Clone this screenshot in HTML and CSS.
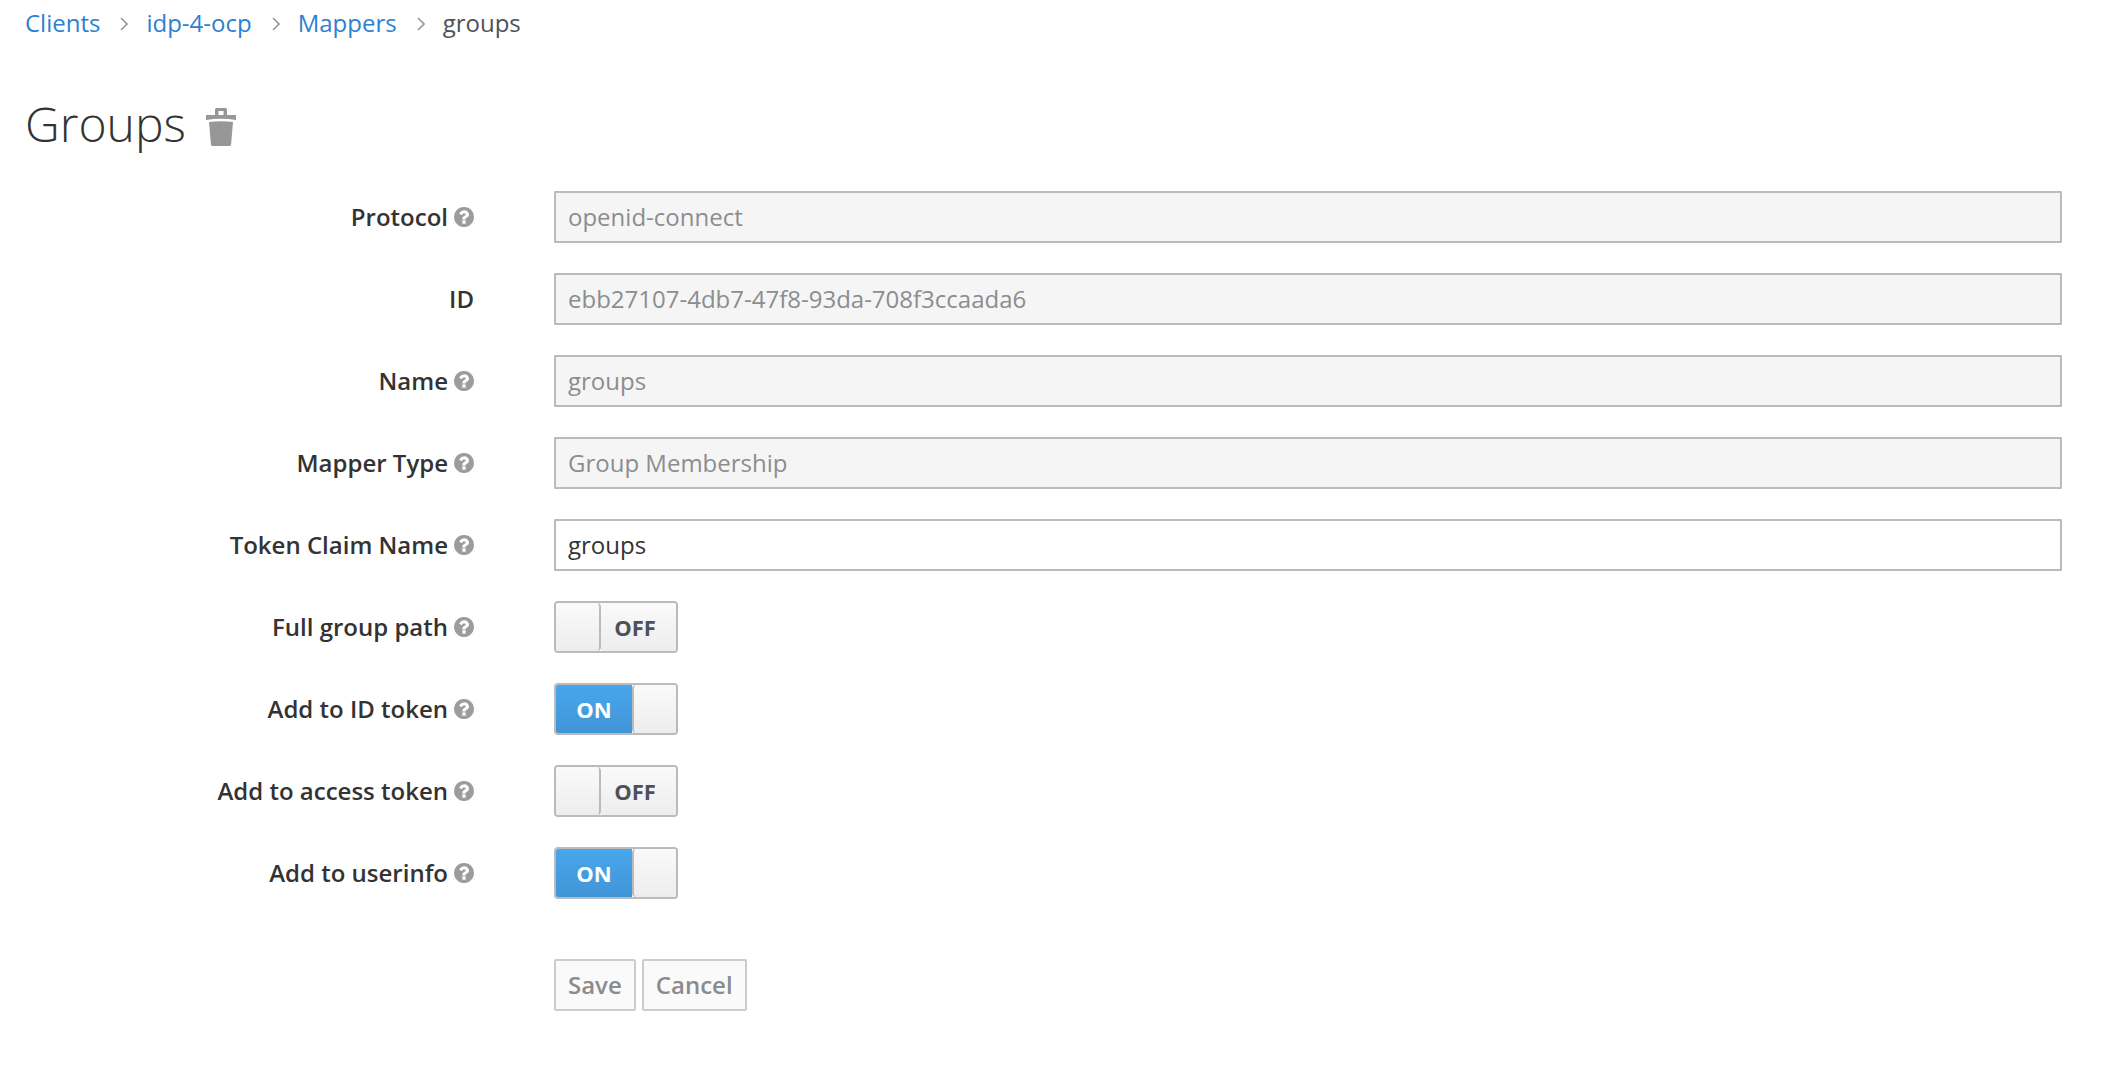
FILE: index.html
```html
<!DOCTYPE html>
<html lang="en">
<head>
    <meta charset="UTF-8">
    <title>Groups</title>
    <link rel="stylesheet" href="styles.css">
</head>
<body>
    <svg class="defs" width="0" height="0">
        <symbol id="help" viewBox="0 0 1536 1536">
            <path d="M896 1248v-192q0-14-9-23t-23-9h-192q-14 0-23 9t-9 23v192q0 14 9 23t23 9h192q14 0 23-9t9-23zm256-672q0-88-55.5-163t-138.5-116-170-41q-243 0-371 213-15 24 8 42l132 100q7 6 19 6 16 0 25-12 53-68 86-92 34-24 86-24 48 0 85.5 26t37.5 59q0 38-20 61t-68 45q-63 28-115.5 86.5t-52.5 125.5v36q0 14 9 23t23 9h192q14 0 23-9t9-23q0-19 21.5-49.5t54.5-49.5q32-18 49-28.5t46-35 44.5-48 28-60.5 12.5-81zm384 192q0 209-103 385.5t-279.5 279.5-385.5 103-385.5-103-279.5-279.5-103-385.5 103-385.5 279.5-279.5 385.5-103 385.5 103 279.5 279.5 103 385.5z"/>
        </symbol>
        <symbol id="chevron" viewBox="0 0 8 14">
            <path d="M1 1l6 6-6 6" fill="none" stroke="currentColor" stroke-width="1.6"/>
        </symbol>
    </svg>

    <nav class="breadcrumb">
        <a href="#">Clients</a>
        <svg class="sep"><use href="#chevron"/></svg>
        <a href="#">idp-4-ocp</a>
        <svg class="sep"><use href="#chevron"/></svg>
        <a href="#">Mappers</a>
        <svg class="sep"><use href="#chevron"/></svg>
        <span>groups</span>
    </nav>

    <h1 class="title">
        Groups
        <svg class="trash" viewBox="0 0 30 38">
            <path d="M10 0h10l1 1v6h9v5q-15-2.500-30 0v-5h9v-6zM12.500 3v4h5v-4z" fill-rule="evenodd"/>
            <path d="M3 14q12-1.500 24 0l-2 23-1 1h-18l-1-1z"/>
        </svg>
    </h1>

    <form class="mapper-form">
        <div class="row">
            <label><span>Protocol</span> <svg class="help"><use href="#help"/></svg></label>
            <input class="field" type="text" value="openid-connect" readonly disabled>
        </div>
        <div class="row">
            <label><span>ID</span></label>
            <input class="field" type="text" value="ebb27107-4db7-47f8-93da-708f3ccaada6" readonly disabled>
        </div>
        <div class="row">
            <label><span>Name</span> <svg class="help"><use href="#help"/></svg></label>
            <input class="field" type="text" value="groups" readonly disabled>
        </div>
        <div class="row">
            <label><span>Mapper Type</span> <svg class="help"><use href="#help"/></svg></label>
            <input class="field" type="text" value="Group Membership" readonly disabled>
        </div>
        <div class="row">
            <label><span>Token Claim Name</span> <svg class="help"><use href="#help"/></svg></label>
            <input class="field" type="text" value="groups">
        </div>
        <div class="row">
            <label><span>Full group path</span> <svg class="help"><use href="#help"/></svg></label>
            <div class="switch"><span class="knob"></span><span class="off">OFF</span></div>
        </div>
        <div class="row">
            <label><span>Add to ID token</span> <svg class="help"><use href="#help"/></svg></label>
            <div class="switch"><span class="on">ON</span><span class="knob knob-right"></span></div>
        </div>
        <div class="row">
            <label><span>Add to access token</span> <svg class="help"><use href="#help"/></svg></label>
            <div class="switch"><span class="knob"></span><span class="off">OFF</span></div>
        </div>
        <div class="row">
            <label><span>Add to userinfo</span> <svg class="help"><use href="#help"/></svg></label>
            <div class="switch"><span class="on">ON</span><span class="knob knob-right"></span></div>
        </div>
        <div class="row actions">
            <div class="buttons">
                <button type="button">Save</button>
                <button type="button">Cancel</button>
            </div>
        </div>
    </form>
</body>
</html>
```

FILE: styles.css
```css
body {
    font-family: 'Open Sans', sans-serif;
    font-size: 24px;
    background-color: #fff;
    color: #333;
    margin: 0;
    padding: 0 60px 0 25px;
}
.defs {
    position: absolute;
}
.breadcrumb {
    display: flex;
    align-items: center;
    height: 44px;
    color: #4d5258;
}
.breadcrumb a {
    color: #2f7fd1;
    text-decoration: none;
}
.sep {
    width: 8px;
    height: 14px;
    margin: 4px 18px 0 20px;
    color: #999;
}
.title {
    display: flex;
    align-items: center;
    gap: 20px;
    font-size: 48px;
    font-weight: 300;
    line-height: 64px;
    margin: 48px 0 35px;
}
.trash {
    width: 30px;
    height: 38px;
    fill: #979797;
    margin-top: 6px;
}
.row {
    display: grid;
    grid-template-columns: 449px 1fr;
    column-gap: 80px;
    margin-bottom: 30px;
    align-items: center;
    height: 52px;
}
.row label {
    display: flex;
    align-items: center;
    justify-content: flex-end;
    gap: 6px;
    font-weight: 600;
}
.row label span {
    padding-bottom: 2px;
}
.help {
    width: 20px;
    height: 20px;
    fill: #9c9c9c;
}
.field {
    box-sizing: border-box;
    width: 100%;
    height: 52px;
    padding: 0 12px 2px;
    font-family: inherit;
    font-size: 24px;
    color: #333;
    background-color: #fff;
    border: 2px solid #bbb;
    border-radius: 1px;
    outline: none;
}
.field:disabled {
    color: #8b8d8f;
    background-color: #f5f5f5;
    opacity: 1;
}
.switch {
    box-sizing: border-box;
    display: flex;
    width: 124px;
    height: 52px;
    border: 2px solid #bbb;
    border-radius: 4px;
    overflow: hidden;
    font-weight: 700;
}
.knob {
    box-sizing: border-box;
    width: 45px;
    background: linear-gradient(to bottom, #fafafa, #ededed);
    border-right: 2px solid #bbb;
    border-radius: 0 4px 4px 0;
}
.knob-right {
    width: 44px;
    border-right: none;
    border-left: 2px solid #bbb;
    border-radius: 4px 0 0 4px;
}
.off {
    flex: 1;
    display: flex;
    align-items: center;
    justify-content: center;
    padding-right: 7px;
    font-size: 22px;
    color: #4d5258;
    background: linear-gradient(to bottom, #fafafa, #ededed);
}
.on {
    flex: 1;
    display: flex;
    align-items: center;
    justify-content: center;
    font-size: 22px;
    color: #fff;
    background: linear-gradient(to bottom, #49a6ec, #4095d6);
}
.actions {
    margin-top: 60px;
}
.actions .buttons {
    grid-column: 2;
    display: flex;
    gap: 6px;
}
button {
    box-sizing: border-box;
    height: 52px;
    padding: 0 12px 2px;
    font-family: inherit;
    font-size: 24px;
    font-weight: 600;
    color: #8b8b8b;
    background-color: #fafafa;
    border: 2px solid #ccc;
    border-radius: 2px;
}
```
